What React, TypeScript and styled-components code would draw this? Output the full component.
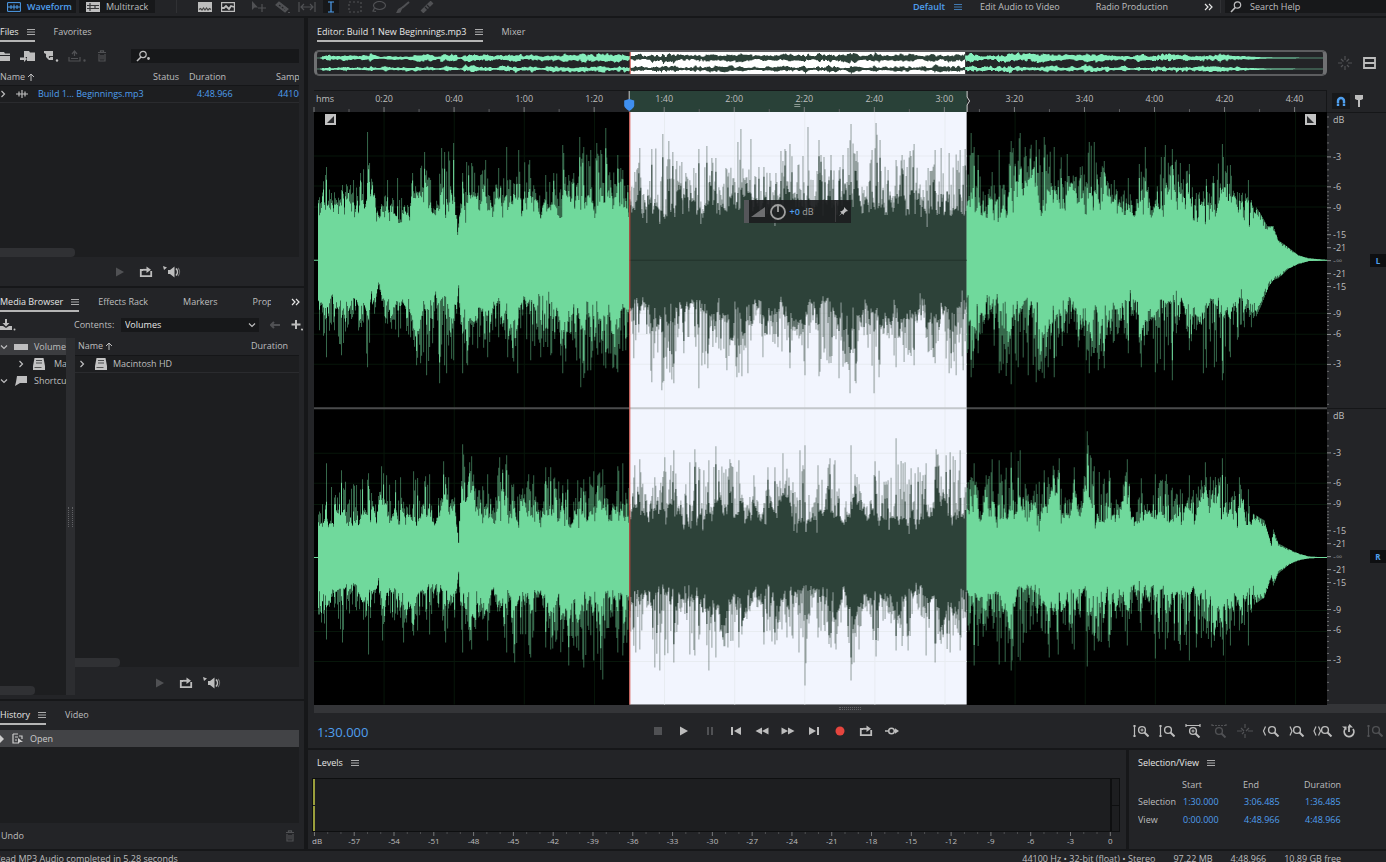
import React from 'react';
import styled, { createGlobalStyle } from 'styled-components';

const color = {
  gap: '#161719',
  panel: '#232427',
  well: '#1d1e20',
  dark: '#17181a',
  text: '#bebebf',
  bright: '#e6e6e6',
  dim: '#505154',
  blue: '#4f9fee',
  wave: '#70d99c',
  waveDark: '#2d4239',
  selection: '#f2f5fe',
};

const GlobalStyle = createGlobalStyle`
  * { box-sizing: border-box; }
  body { margin: 0; background: ${color.gap}; overflow: hidden; }
  body, button, input, select { font-family: 'Open Sans', 'Noto Sans', sans-serif; font-size: 9px; font-weight: 500; line-height: 12px; color: ${color.text}; }
  button { display: inline-flex; align-items: center; justify-content: center; padding: 0; border: 0; background: none; }
  svg { display: block; flex: none; }
  table { border-collapse: collapse; table-layout: fixed; width: 100%; }
  th { font-weight: 500; text-align: left; }
  th, td { padding: 0; white-space: nowrap; overflow: hidden; }
`;

/* ---------- frame ---------- */

const Shell = styled.div`
  display: flex;
  flex-direction: column;
  height: 100vh;
`;
const TopBar = styled.header`
  display: flex;
  align-items: flex-start;
  flex: none;
  height: 16px;
  background: ${color.panel};
`;
const Workspace = styled.main`
  display: grid;
  grid-template-columns: 304px minmax(0, 1fr);
  gap: 4px;
  flex: 1;
  min-height: 0;
  padding: 2px 0;
`;
const Column = styled.div`
  display: flex;
  flex-direction: column;
  gap: 2px;
  min-width: 0;
  min-height: 0;
`;
const Panel = styled.section<{ $height?: number }>`
  display: flex;
  flex-direction: column;
  flex: ${(p) => (p.$height ? `0 0 ${p.$height}px` : '1')};
  min-width: 0;
  min-height: 0;
  overflow: hidden;
  background: ${color.panel};
`;
const StatusBar = styled.footer`
  display: flex;
  flex: none;
  height: 11px;
  padding-right: 45px;
  overflow: hidden;
  background: ${color.panel};
  white-space: nowrap;
  line-height: 16px;
`;
const StatusMessage = styled.span`
  flex: 1;
  margin-left: -5px;
`;
const StatusItems = styled.div`
  display: flex;
  gap: 18px;
`;

/* ---------- shared parts ---------- */

const Tabs = styled.nav<{ $inset?: number; $spread?: boolean }>`
  display: flex;
  gap: 19px;
  flex: none;
  height: 24px;
  padding-left: ${(p) => p.$inset ?? 0}px;
  white-space: nowrap;
  overflow: hidden;
  ${(p) => (p.$spread ? 'button + button + button { margin-left: 16px; } button:last-child { margin-left: auto; margin-right: 4px; }' : '')}
`;
const Tab = styled.button<{ $active?: boolean; $clip?: number }>`
  gap: 8px;
  height: 24px;
  padding-top: 5px;
  border-bottom: 2px solid ${(p) => (p.$active ? '#b5b5b5' : 'transparent')};
  color: ${(p) => (p.$active ? color.bright : color.text)};
  ${(p) => (p.$clip ? `width: ${p.$clip}px; overflow: hidden; justify-content: flex-start;` : '')}
`;
const PanelTitle = styled.h2`
  display: flex;
  align-items: center;
  gap: 8px;
  flex: none;
  height: 26px;
  margin: 0;
  padding-left: 9px;
  font-size: 9px;
  font-weight: 500;
  color: ${color.bright};
`;
const IconButton = styled.button<{ $width?: number; $tone?: 'dim' | 'blue' | 'red' }>`
  flex: none;
  width: ${(p) => p.$width ?? 26}px;
  height: 16px;
  color: ${(p) => (p.$tone === 'dim' ? color.dim : p.$tone === 'blue' ? color.blue : p.$tone === 'red' ? '#e5453e' : '#bdbdbd')};
  background: ${(p) => (p.$tone === 'blue' ? color.dark : 'none')};
`;
const Divider = styled.span`
  width: 1px;
  height: 13px;
  background: #303134;
`;
const PreviewControls = styled.div<{ $start: number; $height: number }>`
  display: flex;
  align-items: center;
  flex: none;
  height: ${(p) => p.$height}px;
  padding-left: ${(p) => p.$start}px;
`;
const ScrollThumb = styled.div<{ $width: number }>`
  flex: none;
  width: ${(p) => p.$width}px;
  height: 9px;
  margin-top: auto;
  border-radius: 0 4px 4px 0;
  background: #303134;
`;

/* ---------- top bar ---------- */

const ModeButton = styled.button<{ $active?: boolean }>`
  gap: 6px;
  height: 13px;
  width: 76px;
  margin-right: 3px;
  padding: 0 0 0 7px;
  justify-content: flex-start;
  background: ${color.dark};
  color: ${(p) => (p.$active ? color.blue : color.text)};
  font-weight: ${(p) => (p.$active ? 600 : 500)};
`;
const Tools = styled.div<{ $gap: number; $start: number }>`
  display: flex;
  gap: ${(p) => p.$gap}px;
  margin-left: ${(p) => p.$start}px;
  button { height: 13px; }
`;
const Workspaces = styled.nav`
  display: flex;
  align-items: center;
  height: 13px;
  margin-left: auto;
`;
const WorkspaceButton = styled.button<{ $active?: boolean }>`
  gap: 9px;
  margin-right: ${(p) => (p.$active ? 18 : 36)}px;
  color: ${(p) => (p.$active ? color.blue : color.text)};
  font-weight: ${(p) => (p.$active ? 600 : 500)};
`;
const HelpSearch = styled.label`
  display: flex;
  align-items: center;
  gap: 8px;
  width: 161px;
  height: 13px;
  margin-left: 4px;
  padding-left: 5px;
  background: ${color.dark};
  input { width: 110px; height: 13px; padding: 0; border: 0; background: none; outline: 0; }
  input::placeholder { color: ${color.text}; opacity: 1; }
`;

/* ---------- files ---------- */

const FileTools = styled.div`
  display: flex;
  align-items: center;
  flex: none;
  height: 28px;
  padding-right: 5px;
`;
const FileSearch = styled.label`
  display: flex;
  align-items: center;
  flex: 1;
  height: 14px;
  margin-left: 22px;
  padding-left: 4px;
  background: ${color.dark};
  input { width: 100%; height: 12px; border: 0; background: none; outline: 0; }
`;
const Well = styled.div`
  display: flex;
  flex-direction: column;
  flex: 1;
  min-width: 0;
  min-height: 0;
  margin-right: 5px;
  background: ${color.well};
`;
const FilesTable = styled.table`
  th { height: 15px; background: ${color.panel}; }
  td { height: 17px; color: ${color.blue}; border-top: 1px solid #151618; border-bottom: 1px solid #2a2b2e; }
  th:first-child, td:first-child { width: 153px; }
  th:nth-child(2) { width: 36px; }
  th:nth-child(3) { width: 87px; }
  td:nth-child(3) { padding-left: 8px; }
  td:nth-child(4) { padding-left: 2px; }
`;
const CellRow = styled.span<{ $gap?: number; $indent?: number }>`
  display: flex;
  align-items: center;
  gap: ${(p) => p.$gap ?? 6}px;
  padding-left: ${(p) => p.$indent ?? 0}px;
`;

/* ---------- media browser ---------- */

const MediaTools = styled.div`
  display: flex;
  align-items: center;
  flex: none;
  height: 26px;
`;
const Contents = styled.label`
  display: flex;
  align-items: center;
  justify-content: space-between;
  width: 185px;
  margin-left: 58px;
`;
const SelectBox = styled.span`
  display: grid;
  align-items: center;
  width: 138px;
  background: ${color.dark};
  select, svg { grid-area: 1 / 1; }
  svg { justify-self: end; margin-right: 3px; }
  select { appearance: none; width: 138px; height: 14px; padding: 0 4px; border: 0; background: none; color: ${color.bright}; outline: 0; }
`;
const MediaBody = styled.div`
  display: grid;
  grid-template-columns: 66px 9px minmax(0, 1fr);
  flex: 1;
  min-height: 0;
  padding-right: 5px;
`;
const Tree = styled.ul`
  display: flex;
  flex-direction: column;
  margin: 0 0 4px;
  padding: 0;
  list-style: none;
  overflow: hidden;
  background: ${color.well};
`;
const TreeItem = styled.li<{ $depth?: number; $selected?: boolean }>`
  display: flex;
  align-items: center;
  gap: ${(p) => (p.$depth ? 9 : 6)}px;
  flex: none;
  height: 17px;
  padding-left: ${(p) => (p.$depth ? 18 : 0)}px;
  white-space: nowrap;
  background: ${(p) => (p.$selected ? '#3c3d40' : 'none')};
`;
const Splitter = styled.div`
  display: flex;
  align-items: center;
  justify-content: center;
  margin-bottom: 4px;
  background: #2c2d30;
  &::after { content: ''; width: 3px; height: 20px; border-left: 1px dotted #606164; border-right: 1px dotted #606164; }
`;
const MediaRight = styled.div`
  display: flex;
  flex-direction: column;
  min-width: 0;
`;
const MediaWell = styled.div`
  display: flex;
  flex-direction: column;
  flex: 1;
  min-height: 0;
  background: ${color.well};
`;
const MediaTable = styled.table`
  th { height: 17px; padding-left: 3px; background: ${color.panel}; }
  td { height: 17px; padding-left: 3px; border-top: 1px solid #151618; border-bottom: 1px solid #2a2b2e; }
  th:last-child { width: 48px; padding: 0; }
`;

/* ---------- history ---------- */

const HistoryList = styled.ol`
  flex: 1;
  margin: 5px 5px 0 0;
  padding: 0;
  list-style: none;
  background: ${color.well};
`;
const HistoryItem = styled.li`
  display: flex;
  align-items: center;
  gap: 7px;
  height: 17px;
  background: #424346;
  color: #cccccc;
`;
const HistoryFooter = styled.div`
  display: flex;
  align-items: center;
  justify-content: space-between;
  flex: none;
  height: 26px;
  padding: 0 8px 0 1px;
`;

/* ---------- editor ---------- */

const EditorRow = styled.div<{ $height?: number; $align?: string }>`
  display: grid;
  grid-template-columns: minmax(0, 1fr) 59px;
  align-items: ${(p) => p.$align ?? 'center'};
  flex: ${(p) => (p.$height ? `0 0 ${p.$height}px` : '1')};
  min-height: 0;
  padding-left: 6px;
`;
const OverviewFrame = styled.div`
  height: 26px;
  border: 2px solid #5c5d5f;
  border-left: 3px solid #6f7072;
  border-right: 4px solid #6f7072;
  border-radius: 5px;
  background: ${color.panel};
  svg { width: 100%; height: 22px; }
`;
const SideTools = styled.div`
  display: flex;
  align-items: center;
  height: 22px;
  padding-left: 5px;
`;
const RulerBox = styled.div`
  height: 22px;
  border-top: 1px solid #151618;
  border-right: 1px solid #151618;
  svg { width: 100%; height: 21px; overflow: visible; }
`;
const Canvas = styled.div`
  position: relative;
  height: 100%;
  background: #000;
  > svg { width: 100%; height: 100%; }
`;
const FadeHandle = styled.button<{ $side: 'left' | 'right' }>`
  position: absolute;
  top: 2px;
  ${(p) => p.$side}: 11px;
`;
const GainHud = styled.div`
  position: absolute;
  top: 88px;
  left: 42.4%;
  display: flex;
  align-items: center;
  gap: 4px;
  width: 107px;
  height: 23px;
  padding-left: 2px;
  border-left: 5px solid #55565a;
  background: rgba(28, 29, 31, 0.92);
  color: #a0a0a0;
  b { color: ${color.blue}; font-weight: 600; }
`;
const HudPin = styled.button`
  width: 16px;
  height: 21px;
  margin-left: auto;
  border-left: 1px solid #3a3a3c;
`;
const Scales = styled.div`
  display: flex;
  flex-direction: column;
  height: 100%;
`;
const ChannelScale = styled.div`
  display: flex;
  align-items: center;
  justify-content: space-between;
  flex: 1;
  min-height: 0;
  border-top: 1px solid #151618;
  svg { height: 100%; }
`;
const ChannelButton = styled.button`
  width: 16px;
  height: 13px;
  background: #0e0f11;
  color: ${color.blue};
  font-size: 8px;
  font-weight: 700;
`;
const HScroll = styled.div`
  flex: none;
  height: 9px;
  margin: 1px 0 0 6px;
  background: #343538;
  display: flex;
  align-items: center;
  justify-content: center;
`;
const Grip = styled.span`
  width: 22px;
  height: 3px;
  border-top: 1px dotted #606164;
  border-bottom: 1px dotted #606164;
`;
const Transport = styled.div`
  display: flex;
  align-items: center;
  flex: none;
  height: 35px;
  padding-left: 9px;
`;
const TimeDisplay = styled.output`
  flex: 0 0 328px;
  padding-top: 2px;
  font-size: 13px;
  line-height: 18px;
  color: ${color.blue};
`;
const ZoomTools = styled.div`
  display: flex;
  margin: 0 -2px 0 auto;
`;

/* ---------- bottom panels ---------- */

const BottomRow = styled.div`
  display: grid;
  grid-template-columns: minmax(0, 1fr) 257px;
  gap: 3px;
  flex: none;
  height: 99px;
`;
const Meter = styled.div`
  flex: none;
  height: 54px;
  margin: 2px 6px 0 4px;
  border: 1px solid #0e0f10;
  background: ${color.well};
  display: grid;
  grid-template-columns: 2px 1fr 9px;
`;
const MeterLevel = styled.span`
  display: grid;
  grid-template-rows: 1fr 1fr;
  gap: 1px;
  i { background: #9a9f3c; }
`;
const MeterClip = styled.div`
  grid-column: 3;
  border-left: 2px solid #0e0f10;
  background: linear-gradient(#0e0f10, #0e0f10) center / 100% 1px no-repeat;
`;
const MeterAxis = styled.svg`
  width: calc(100% - 10px);
  height: 16px;
  margin-left: 4px;
  overflow: visible;
`;
const RangeTable = styled.table`
  width: 240px;
  margin-left: 9px;
  th, td { height: 18px; }
  th:first-child { width: 44px; }
  td { color: ${color.blue}; padding-left: 1px; }
  thead th { height: 17px; }
  thead th:nth-child(2), thead th:nth-child(3) { width: 61px; }
`;

/* ---------- icons ---------- */

type IconProps = { w?: number; h?: number; children: React.ReactNode; fill?: boolean };
const Icon = ({ w = 14, h = 12, fill, children }: IconProps) => (
  <svg width={w} height={h} viewBox={`0 0 ${w} ${h}`} fill={fill ? 'currentColor' : 'none'} stroke={fill ? 'none' : 'currentColor'} strokeWidth="1.2" aria-hidden="true">
    {children}
  </svg>
);
const MenuIcon = () => (
  <Icon w={8} h={8}><path d="M0 1.500h8M0 4h8M0 6.500h8" strokeWidth="1" opacity=".7" /></Icon>
);
const LoopIcon = () => (
  <Icon w={14}><path d="M4 4H1.8v6.2h10.4V5" strokeWidth="1.8" /><path d="M4 3.8h4" strokeWidth="1.8" /><path d="M7.5.6 12 3.8 7.5 7z" fill="currentColor" stroke="none" /></Icon>
);
const SpeakerIcon = () => (
  <Icon w={18}><path d="M5 4h2l4.500-3.500v11L7 8H5z" fill="currentColor" stroke="none" /><path d="M13 2.500a5 5 0 0 1 0 7" strokeWidth="1.600" /><path d="M15 2a6 6 0 0 1 0 8" opacity=".5" /><path d="M0 0l4 1.500L1 4z" fill="currentColor" stroke="none" /></Icon>
);
const PlayIcon = () => <Icon w={10} h={10} fill><path d="M1 0.5 9 5 1 9.5z" /></Icon>;
const TrashIcon = () => (
  <Icon w={10}><path d="M1 2.5h8M3.5 2V.8h3V2M2 4v7h6V4M4 5v4.500M6 5v4.500" /></Icon>
);
const ChevronDown = () => <Icon w={8} h={8}><path d="M1 2.500 4 5.500 7 2.500" strokeWidth="1.200" /></Icon>;
const ChevronRight = () => <Icon w={6} h={8}><path d="M1.500 1 4.500 4 1.500 7" strokeWidth="1.200" /></Icon>;
const DriveIcon = () => (
  <Icon w={12} fill><path d="M1.500 0h9L12 8v4H0V8z" fill="#c4c4c4" /><path d="M3 2.500h6M3 5h6" stroke="#4b4c4e" strokeWidth="1" /><path d="M1.500 9.500h7" stroke="#555" strokeWidth="1" /></Icon>
);
const MagnifierIcon = () => (
  <Icon w={12}><circle cx="7.500" cy="4" r="3.200" /><path d="M5.200 6.500 1 11" strokeWidth="1.600" /></Icon>
);
const RightLens = ({ x = 0 }: { x?: number }) => (
  <g transform={`translate(${x} 0)`}><circle cx="4" cy="5" r="3.400" strokeWidth="1.400" /><path d="M6.500 7.500 10.500 11.500" strokeWidth="2" /></g>
);

/* ---------- waveform data ---------- */

const WIDTH = 1012;
const SEL_START = 315;
const SEL_END = 652;
const TOTAL_SECONDS = 288.966;

const leftUp = '4:60 12:93 17:67 28:75 39:80 46:87 53:128 55:97 61:62 64:45 73:80 78:62 83:82 93:55 98:87 106:92 110:108 116:80 121:50 127:112 130:108 139:117 143:28 148:87 152:98 157:97 166:85 171:100 176:60 184:92 192:113 196:80 204:110 215:100 223:60 231:85 239:87 248:115 254:85 259:87 265:123 269:113 276:110 282:117 286:110 291:132 296:80 303:105 308:90 313:75 325:112 330:60 337:111 348:126 354:119 358:108 367:98 371:87 379:92 384:111 392:114 397:102 401:102 406:65 411:92 423:118 426:131 430:80 436:121 444:93 449:93 461:87 466:109 470:111 475:116 483:95 493:133 498:80 504:120 509:103 516:105 528:105 536:136 542:109 549:70 557:110 561:137 565:120 573:90 576:60 581:100 587:105 595:109 599:116 608:70 613:92 620:110 626:112 634:107 645:110 650:111 656:127 663:105 670:65 677:88 684:110 690:70 696:119 705:127 710:113 721:120 729:123 739:113 752:106 760:83 765:93 774:118 779:118 789:99 799:80 813:82 819:45 824:96 830:113 837:50 846:103 850:115 857:111 865:97 874:96 881:67 891:81 898:84 907:116 915:95 924:67 933:80 936:60 946:45 952:34 958:34 963:20 974:12 983:5 993:2 1012:0';
const leftDown = '5:70 12:97 20:70 27:95 38:57 53:107 61:47 64:25 71:63 84:77 96:77 102:105 112:115 118:83 125:123 132:113 139:100 144:28 148:113 153:105 163:88 173:97 178:70 193:97 203:113 216:100 226:97 236:95 248:113 258:80 266:127 276:110 291:108 303:112 311:90 319:98 329:50 337:122 347:130 359:123 369:93 384:128 393:108 406:90 412:110 422:117 427:116 433:113 442:50 448:97 463:87 475:108 482:75 490:115 498:60 504:116 514:103 524:118 535:133 541:123 549:75 559:133 564:117 572:75 581:107 599:105 606:60 613:92 620:103 634:113 641:115 648:110 656:117 663:93 673:60 684:113 696:124 703:107 713:115 721:122 729:118 739:117 752:73 763:87 774:113 783:110 789:108 803:73 813:93 819:50 826:107 836:60 840:112 849:110 857:120 864:60 874:90 881:70 888:113 899:107 907:120 915:97 929:67 936:67 946:45 953:27 958:20 963:18 974:8 983:4 993:1 1012:0';
const rightUp = '4:43 12:94 20:60 27:87 39:73 48:78 54:84 61:53 67:91 72:82 86:80 93:50 99:86 111:81 115:83 120:33 129:96 134:80 140:60 144:15 148:113 157:101 164:67 173:83 178:47 185:100 192:102 199:73 214:83 219:82 226:47 231:90 236:90 248:72 253:78 263:77 269:78 279:86 288:88 296:43 303:91 308:94 320:92 325:98 331:63 340:80 350:100 359:107 366:57 375:95 380:108 384:90 394:97 401:111 411:88 415:98 424:97 431:50 439:82 446:40 453:90 460:90 468:104 478:75 485:107 490:112 497:50 503:92 515:99 520:97 530:50 536:112 544:73 551:50 560:96 573:77 581:119 590:95 603:90 611:94 616:50 621:108 631:102 635:105 645:107 650:70 659:94 663:67 677:98 684:97 696:105 705:107 713:63 721:73 729:87 744:99 750:60 759:90 765:50 772:126 779:91 794:87 804:50 812:98 819:35 826:79 835:45 840:83 851:83 865:68 874:82 890:95 898:77 907:99 916:60 924:80 933:68 939:43 949:37 956:13 958:28 963:14 974:8 983:4 993:1 1012:0';
const rightDown = '4:57 12:82 20:50 28:85 38:47 54:97 64:23 68:83 78:60 89:85 99:78 115:77 120:33 131:85 140:60 144:16 148:95 157:92 164:60 173:83 178:33 192:95 200:105 216:100 224:40 231:90 236:92 254:108 269:110 279:103 288:122 296:60 303:95 308:98 321:95 325:92 332:50 340:110 345:113 359:105 367:50 375:97 380:98 394:113 401:100 413:90 424:90 440:40 449:87 460:87 472:80 484:95 490:128 497:50 503:80 516:90 521:92 530:50 536:123 544:92 550:50 561:99 573:55 581:93 593:93 604:50 611:98 620:105 635:95 645:93 650:60 659:108 671:73 684:107 696:113 705:103 718:67 734:100 743:97 759:92 765:60 772:109 779:93 794:90 804:50 812:88 819:35 826:73 834:45 840:101 850:92 865:93 874:103 881:90 896:90 908:98 915:88 924:73 933:88 939:47 949:40 956:20 958:28 963:16 974:7 983:3 993:1 1012:0';

type Side = { peak: number[]; body: number[] };

function seeded(seed: number) {
  let s = seed;
  return () => {
    s = (s * 1664525 + 1013904223) % 4294967296;
    return s / 4294967296;
  };
}

/* Slowly moving noise in 0..1 with a new target every `step` columns. */
function drift(step: number, random: () => number) {
  const knots = Array.from({ length: Math.ceil(WIDTH / step) + 2 }, random);
  return (x: number) => {
    const k = Math.floor(x / step);
    const t = x / step - k;
    return knots[k] * (1 - t) + knots[k + 1] * t;
  };
}

/* Expands sparse "x:height" peaks into one column per pixel. */
function expand(source: string, floor: number, seed: number): Side {
  const random = seeded(seed);
  const slow = drift(11, random);
  const quick = drift(2, random);
  const points = source.split(' ').map((p) => p.split(':').map(Number));
  const peak: number[] = [];
  const body: number[] = [];
  let i = 0;
  for (let x = 0; x <= WIDTH; x++) {
    if (x < 4) {
      peak.push(0);
      body.push(0);
      continue;
    }
    while (i < points.length - 2 && points[i + 1][0] <= x) i++;
    const [x0, h0] = points[i];
    const [x1, h1] = points[i + 1];
    const env = h0 + ((h1 - h0) * (x - x0)) / (x1 - x0);
    if (x > 940) {
      peak.push(env);
      body.push(env * (0.82 + 0.18 * random()));
      continue;
    }
    const dip = random() < 0.05 ? 0.72 : 1;
    const base = Math.min(floor * (0.8 + 0.35 * quick(x)) * dip, env * 0.85);
    const room = env - base;
    const swell = base + room * 0.75 * slow(x) * (0.2 + 0.8 * quick(x));
    const tall = random();
    const top = x === x0 ? env : tall < 0.35 ? swell : swell + (env - swell) * (0.1 + 0.85 * random());
    const solid = tall > 0.82 ? swell + (top - swell) * 0.6 : swell * (0.9 + 0.1 * random());
    peak.push(Math.max(top, swell));
    body.push(x === x0 ? Math.max(swell, base + room * (h0 % 3 ? 0.3 : 0.75)) : solid);
  }
  return { peak, body };
}

const channels = [
  { center: 148, up: expand(leftUp, 50, 7), down: expand(leftDown, 44, 21) },
  { center: 445, up: expand(rightUp, 38, 43), down: expand(rightDown, 34, 91) },
];

/* Stepped columns, so that single peaks stay crisp. */
function columns(center: number, up: number[], down: number[], from: number, to: number) {
  let d = `M${from} ${center}`;
  for (let x = from; x < to; x++) d += `V${(center - up[x]).toFixed(1)}H${x + 1}`;
  for (let x = to - 1; x >= from; x--) d += `V${(center + down[x]).toFixed(1)}H${x}`;
  return d + 'Z';
}

const segments = [
  { from: 0, to: SEL_START, fill: color.wave },
  { from: SEL_START, to: SEL_END, fill: color.waveDark },
  { from: SEL_END, to: WIDTH, fill: color.wave },
];

const gridX = Array.from({ length: 14 }, (_, i) => ((i + 1) * 20 * WIDTH) / TOTAL_SECONDS);
const gridY = channels.flatMap((c) => [-104, -74, -53, 53, 74, 104].map((o) => c.center + o));

const Waveform = () => (
  <svg viewBox="0 0 1012 592" preserveAspectRatio="none" role="img" aria-label="Stereo waveform">
    <path d={gridX.map((x) => `M${x.toFixed(1)} 0V592`).join('') + gridY.map((y) => `M0 ${y}H1012`).join('')} stroke="#07160a" strokeWidth="1" />
    <rect x={SEL_START} width={SEL_END - SEL_START} height="592" fill={color.selection} />
    <path d={gridX.filter((x) => x > SEL_START && x < SEL_END).map((x) => `M${x.toFixed(1)} 0V592`).join('') + gridY.map((y) => `M${SEL_START} ${y}H${SEL_END}`).join('')} stroke="#e8ecf1" strokeWidth="1" />
    {channels.map((c) =>
      segments.map((s) => (
        <g key={`${c.center}-${s.from}`} fill={s.fill}>
          <path d={columns(c.center, c.up.peak, c.down.peak, s.from, s.to)} opacity=".48" />
          <path d={columns(c.center, c.up.body, c.down.body, s.from, s.to)} />
        </g>
      )),
    )}
    <path d="M0 148H4M0 445H4M990 148H1012M990 445H1012" stroke={color.wave} strokeWidth="1" />
    <path d={`M${SEL_START} 148H${SEL_END}`} stroke="#22332b" strokeWidth="1" />
    <path d={`M0 296H${SEL_START}M${SEL_END} 296H1012`} stroke="#4a4b4c" strokeWidth="2" />
    <path d={`M${SEL_START} 296H${SEL_END}`} stroke="#c3c7cb" strokeWidth="2" />
    <path d={`M${SEL_START}.5 0V592`} stroke="#d2463c" strokeWidth="1" />
  </svg>
);

/* Quiet parts stay a thin line in the overview, loud clusters swell. */
const overviewHeight = (side: Side) =>
  side.peak.map((_, i) => {
    const h = ((side.peak[i - 1] ?? 0) + side.peak[i] + (side.body[i + 1] ?? 0)) / 3;
    return 0.3 + h * 0.014 + Math.max(0, h - 45) * 0.055;
  });
const overview = channels.map((c, i) => ({ center: i ? 17 : 6, up: overviewHeight(c.up), down: overviewHeight(c.down) }));

const Overview = () => (
  <svg viewBox="0 0 1012 22" preserveAspectRatio="none" role="img" aria-label="Overview">
    <rect x={SEL_START} width={SEL_END - SEL_START} height="22" fill="#fff" />
    {overview.map((c) =>
      segments.map((s) => (
        <path key={`${c.center}-${s.from}`} d={columns(c.center, c.up, c.down, s.from, s.to)} fill={s.fill === color.wave ? '#86efbd' : s.fill} />
      )),
    )}
    <path d={`M${SEL_START} 0V22`} stroke="#d2463c" strokeWidth="1" />
  </svg>
);

const at = (seconds: number) => `${((seconds / TOTAL_SECONDS) * 100).toFixed(3)}%`;

const Ruler = () => (
  <svg role="img" aria-label="Time ruler">
    <rect x={at(90)} width={at(96.485)} height="21" fill="#294138" />
    {Array.from({ length: 29 }, (_, i) => (
      <line key={i} x1={at(i * 10)} x2={at(i * 10)} y1={i % 2 ? 18 : 16} y2="21" stroke={i % 2 ? '#5d5e60' : '#7d7e80'} />
    ))}
    <text x="2" y="11" fill={color.text}>hms</text>
    {Array.from({ length: 14 }, (_, i) => {
      const s = (i + 1) * 20;
      return (
        <text key={s} x={at(s)} y="11" fill={color.text} textAnchor="middle">
          {`${Math.floor(s / 60)}:${String(s % 60).padStart(2, '0')}`}
        </text>
      );
    })}
    <svg x={at(90)} overflow="visible">
      <path d="M0 0V10" stroke="#c8c8c8" />
      <path d="M-5 9.500 0 8l5 1.500v5C5 17 0 20 0 20s-5-3-5-5.500z" fill="#3f8ff0" />
    </svg>
    <svg x={at(186.485)} overflow="visible">
      <path d="M0 0V6L2.500 10 0 14V21" stroke="#d0d0d0" fill="none" />
    </svg>
    <svg x={at(138)} overflow="visible">
      <path d="M-3 13.500h6M-3 15.500h6" stroke="#8b9a93" />
    </svg>
  </svg>
);

const dbMarks = [
  { label: '-3', offset: 104 },
  { label: '-6', offset: 74 },
  { label: '-9', offset: 53 },
  { label: '-15', offset: 26 },
  { label: '-21', offset: 13 },
];
const minorDb = [144, 134, 126, 118, 111, 97, 91, 85, 80, 69, 65, 61, 57, 49, 45, 42, 39, 36, 33, 30, 22, 18];
const pct = (offset: number) => `${(50 + (offset / 296) * 100).toFixed(2)}%`;

const DbScale = () => (
  <svg width="36" role="img" aria-label="Decibel scale">
    {minorDb.flatMap((o) => [o, -o]).map((o) => (
      <line key={o} x1="0" x2="2" y1={pct(o)} y2={pct(o)} stroke="#6b6c6e" />
    ))}
    <text x="6" y={pct(-138)} fill={color.text}>dB</text>
    {dbMarks.flatMap((m) => [m.offset, -m.offset].map((o) => (
      <g key={o}>
        <line x1="0" x2="4" y1={pct(o)} y2={pct(o)} stroke="#8b8c8e" />
        <text x="6" y={pct(o + 3)} fill={color.text}>{m.label}</text>
      </g>
    )))}
    <line x1="0" x2="4" y1="50%" y2="50%" stroke="#8b8c8e" />
    <text x="6" y={pct(3)} fill="#77787a">-∞</text>
  </svg>
);

const LevelAxis = () => (
  <MeterAxis role="img" aria-label="Level scale">
    {Array.from({ length: 61 }, (_, i) => {
      const x = `${(98.800 - (i * 98.500) / 60).toFixed(3)}%`;
      return (
        <g key={i}>
          <line x1={x} x2={x} y1="0" y2={i % 3 ? 2 : 4} stroke={i % 3 ? '#4d4e50' : '#77787a'} />
          {i % 3 === 0 && i < 60 && (
            <text x={x} y="12" fontSize="8" fill={color.text} textAnchor="middle">{i ? `-${i}` : '0'}</text>
          )}
        </g>
      );
    })}
    <text x="0" y="12" fontSize="8" fill={color.text}>dB</text>
  </MeterAxis>
);

/* ---------- toolbars ---------- */

type ToolSpec = { label: string; tone?: 'dim' | 'blue' | 'red'; icon: React.ReactNode };

const viewTools: ToolSpec[] = [
  { label: 'Spectral frequency display', icon: <Icon w={14} h={10} fill><path d="M0 0h14v10H0z" /><path d="M1 7.500l1.500-1L4 8l1.500-2L7 8l1.500-2L10 8l1.500-1.500L13 7.500" stroke="#444" fill="none" /></Icon> },
  { label: 'Spectral pitch display', icon: <Icon w={14} h={10}><path d="M.6.6h12.800v8.800H.6z" /><path d="M1 6h2l2-2 3 3 2-3 3 1" strokeWidth="1.800" /></Icon> },
];
const editTools: ToolSpec[] = [
  { label: 'Move', tone: 'dim', icon: <Icon w={16}><path d="M1 0v9l2.500-2.500H7z" fill="currentColor" stroke="none" /><path d="M11 3v8M7 7h8" /></Icon> },
  { label: 'Razor', tone: 'dim', icon: <Icon w={16}><path d="M1 4 4 1l9 7-3 3z" fill="currentColor" /><path d="M4 4l6 4.500" stroke={color.panel} strokeDasharray="2 1.500" /><path d="M13 11.500h2" /></Icon> },
  { label: 'Slip', tone: 'dim', icon: <Icon w={18}><path d="M1 1v10M17 1v10M3 6h12M6 3 3 6l3 3M12 3l3 3-3 3" /></Icon> },
  { label: 'Time selection', tone: 'blue', icon: <Icon w={10}><path d="M2 1h2.500l.5.500.5-.5H8M2 11h2.500l.5-.5.5.5H8M5 1v10" /></Icon> },
  { label: 'Marquee selection', tone: 'dim', icon: <Icon w={14}><path d="M1 1h12v10H1z" strokeDasharray="2 2" /></Icon> },
  { label: 'Lasso selection', tone: 'dim', icon: <Icon w={16}><ellipse cx="8.500" cy="4.500" rx="6" ry="4" /><path d="M3.500 7 2 10l3 .5" /></Icon> },
  { label: 'Paintbrush', tone: 'dim', icon: <Icon w={14}><path d="M13 1 6 7" strokeWidth="2" /><path d="M6 6.500 4 11l-3 .5 1.500-3z" fill="currentColor" /></Icon> },
  { label: 'Spot healing', tone: 'dim', icon: <Icon w={14}><path d="M12 1 2 11" strokeWidth="4" /><path d="M5 6l3 3M7 4l3 3" stroke={color.panel} /></Icon> },
];
const transportTools: ToolSpec[] = [
  { label: 'Stop', tone: 'dim', icon: <Icon w={8} h={8} fill><path d="M0 0h8v8H0z" /></Icon> },
  { label: 'Play', icon: <PlayIcon /> },
  { label: 'Pause', tone: 'dim', icon: <Icon w={8} h={8} fill><path d="M1 0h2v8H1zM5 0h2v8H5z" /></Icon> },
  { label: 'Go to previous', icon: <Icon w={12} h={8} fill><path d="M1 0h2v8H1zM11 0v8L4 4z" /></Icon> },
  { label: 'Rewind', icon: <Icon w={14} h={8} fill><path d="M7 .5v7L.5 4zM13.500.5v7L7 4z" /></Icon> },
  { label: 'Fast forward', icon: <Icon w={14} h={8} fill><path d="M.5.5v7L7 4zM7 .5v7L13.500 4z" /></Icon> },
  { label: 'Go to next', icon: <Icon w={12} h={8} fill><path d="M9 0h2v8H9zM1 0v8l7-4z" /></Icon> },
  { label: 'Record', tone: 'red', icon: <Icon w={10} h={10} fill><circle cx="5" cy="5" r="4.500" /></Icon> },
  { label: 'Loop playback', icon: <LoopIcon /> },
  { label: 'Skip selection', icon: <Icon w={14} h={10}><circle cx="6.500" cy="5" r="2.800" strokeWidth="1.500" /><path d="M0 5h3M9 5h2" strokeWidth="1.500" /><path d="M10 2.300 14 5l-4 2.700z" fill="currentColor" stroke="none" /></Icon> },
];
const zoomTools: ToolSpec[] = [
  { label: 'Zoom in amplitude', icon: <Icon w={16}><path d="M1.500 0v12M0 1h3M0 11h3" /><RightLens x={5} /><path d="M7.500 5h3M9 3.500v3" strokeWidth="1" /></Icon> },
  { label: 'Zoom out amplitude', icon: <Icon w={16}><path d="M1.500 0v12M0 1h3M0 11h3" /><RightLens x={5} /></Icon> },
  { label: 'Zoom in time', icon: <Icon w={16} h={14}><path d="M1 1.500h14M1 0v3M15 0v3" /><g transform="translate(4 2)"><RightLens /><path d="M2.500 5h3M4 3.500v3" strokeWidth="1" /></g></Icon> },
  { label: 'Zoom out time', tone: 'dim', icon: <Icon w={16} h={14}><path d="M1 1.500h14M1 0v3M15 0v3" strokeDasharray="2 1" /><g transform="translate(4 2)"><RightLens /></g></Icon> },
  { label: 'Zoom out full', tone: 'dim', icon: <Icon w={16} h={14}><path d="M8 0v4M8 10v4M0 7h5M11 7h5M4 4l3 3M12 4 9 7M5 10l2-2" /></Icon> },
  { label: 'Zoom in at in point', icon: <Icon w={18}><path d="M3.500 1.500 1.500 6l2 4.500" /><RightLens x={6} /></Icon> },
  { label: 'Zoom in at out point', icon: <Icon w={16}><path d="M1 1.500 3 6l-2 4.500" /><RightLens x={4} /></Icon> },
  { label: 'Zoom to selection', icon: <Icon w={20}><path d="M3 1.500 1 6l2 4.500M5.500 1.500l2 4.500-2 4.500" /><RightLens x={8} /></Icon> },
  { label: 'Zoom to time', icon: <Icon w={14} h={14}><path d="M3.500 4.500a4.800 4.800 0 1 0 7.500.5M7 8V3" strokeWidth="1.800" /><path d="M7.500 0l3.500 3.500H5.500zM0 2.500h4.500v3.500z" fill="currentColor" stroke="none" /></Icon> },
  { label: 'Zoom reset', tone: 'dim', icon: <Icon w={16}><path d="M1.500 0v12M0 1h3M0 11h3" /><RightLens x={5} /></Icon> },
];

const ToolButtons = ({ tools, width }: { tools: ToolSpec[]; width?: number }) => (
  <>
    {tools.map((t) => (
      <IconButton key={t.label} aria-label={t.label} $tone={t.tone} $width={width}>{t.icon}</IconButton>
    ))}
  </>
);

const Preview = ({ start, height }: { start: number; height: number }) => (
  <PreviewControls $start={start} $height={height}>
    <IconButton aria-label="Play preview" $tone="dim"><PlayIcon /></IconButton>
    <IconButton aria-label="Loop preview"><LoopIcon /></IconButton>
    <IconButton aria-label="Auto-play"><SpeakerIcon /></IconButton>
  </PreviewControls>
);

const SortArrow = () => <Icon w={8} h={8}><path d="M4 8V1M1 4l3-3 3 3" strokeWidth="1" /></Icon>;
const MoreIcon = () => <Icon w={9} h={8}><path d="M1 1l3 3-3 3M5 1l3 3-3 3" stroke={color.bright} /></Icon>;

/* ---------- panels ---------- */

const FilesPanel = () => (
  <Panel $height={268}>
    <Tabs>
      <Tab $active>Files<MenuIcon /></Tab>
      <Tab>Favorites</Tab>
    </Tabs>
    <FileTools>
      <IconButton aria-label="Open file" $width={12}><Icon w={12} fill><path d="M0 2h4l1 1.500h5V5H0zM0 6h10v5H0z" /></Icon></IconButton>
      <IconButton aria-label="Import file" $width={30}><Icon w={15} fill><path d="M4 1h5l1 1.500h5V11H7V7H4zM0 7.500h4V5.500L7 9l-3 3v-2H0z" /></Icon></IconButton>
      <IconButton aria-label="New content" $width={18}><Icon w={15} fill><path d="M0 1h9v9H5L2 7V4L0 3z" /><path d="M5.500 8V6.500H9" stroke="#333" fill="none" /><circle cx="13" cy="10.500" r="1.200" /></Icon></IconButton>
      <IconButton aria-label="Insert into multitrack" $width={34} $tone="dim"><Icon w={18}><path d="M1 7v4h11V7M3 8.500h7M6.500 6V1M4 4l2.500-3L9 4" /><circle cx="16.500" cy="10.500" r=".6" /></Icon></IconButton>
      <IconButton aria-label="Delete file" $width={15} $tone="dim"><TrashIcon /></IconButton>
      <FileSearch>
        <Icon w={16}><circle cx="8" cy="4.500" r="3.200" /><path d="M6 7 2 11" strokeWidth="1.600" /><circle cx="13.500" cy="8.500" r=".8" fill="currentColor" /></Icon>
        <input aria-label="Search files" />
      </FileSearch>
    </FileTools>
    <Well>
      <FilesTable>
        <thead>
          <tr>
            <th><CellRow $gap={2}>Name<SortArrow /></CellRow></th>
            <th>Status</th>
            <th>Duration</th>
            <th>Sample</th>
          </tr>
        </thead>
        <tbody>
          <tr>
            <td>
              <CellRow $gap={6}>
                <IconButton aria-label="Expand file" $width={6}><ChevronRight /></IconButton>
                <IconButton aria-label="Audio file" $width={20}><Icon w={12} h={8}><path d="M0 4h12M3 1.500v5M6 0v8M9 1.500v5" /></Icon></IconButton>
                Build 1... Beginnings.mp3
              </CellRow>
            </td>
            <td />
            <td>4:48.966</td>
            <td>44100</td>
          </tr>
        </tbody>
      </FilesTable>
      <ScrollThumb $width={75} />
    </Well>
    <Preview start={107} height={29} />
  </Panel>
);

const MediaPanel = () => (
  <Panel>
    <Tabs $spread>
      <Tab $active>Media Browser<MenuIcon /></Tab>
      <Tab>Effects Rack</Tab>
      <Tab>Markers</Tab>
      <Tab $clip={18}>Properties</Tab>
      <Tab aria-label="More panels"><MoreIcon /></Tab>
    </Tabs>
    <MediaTools>
      <IconButton aria-label="Import media" $width={16}><Icon w={16} fill><path d="M0 7h3l3 2 3-2h3v4H0zM5 0h2v4h2.500L6 7.500 2.500 4H5z" /><circle cx="14.500" cy="10.500" r="1" /></Icon></IconButton>
      <Contents>
        Contents:
        <SelectBox>
          <select defaultValue="Volumes"><option>Volumes</option></select>
          <ChevronDown />
        </SelectBox>
      </Contents>
      <IconButton aria-label="Back" $tone="dim" $width={32}><Icon w={10} h={8}><path d="M1 4h9M4 1 1 4l3 3" strokeWidth="2" /></Icon></IconButton>
      <IconButton aria-label="Add shortcut" $width={12}><Icon w={12}><path d="M5 1v9M.5 5.500h9" strokeWidth="2" /><circle cx="11" cy="10.500" r=".5" /></Icon></IconButton>
    </MediaTools>
    <MediaBody>
      <Tree>
        <TreeItem $selected><ChevronDown /><Icon w={14} h={6} fill><path d="M0 0h14v6H0z" /></Icon>Volumes</TreeItem>
        <TreeItem $depth={1}><ChevronRight /><DriveIcon />Macintosh HD</TreeItem>
        <TreeItem><ChevronDown /><Icon w={14} h={10} fill><path d="M3 0h10v7H6L1 10l1-4z" /></Icon>Shortcuts</TreeItem>
        <ScrollThumb $width={35} />
      </Tree>
      <Splitter />
      <MediaRight>
        <MediaWell>
          <MediaTable>
            <thead>
              <tr>
                <th><CellRow $gap={2}>Name<SortArrow /></CellRow></th>
                <th>Duration</th>
              </tr>
            </thead>
            <tbody>
              <tr>
                <td><CellRow $indent={1}><ChevronRight /><CellRow $indent={4}><DriveIcon />Macintosh HD</CellRow></CellRow></td>
                <td />
              </tr>
            </tbody>
          </MediaTable>
          <ScrollThumb $width={45} />
        </MediaWell>
        <Preview start={72} height={32} />
      </MediaRight>
    </MediaBody>
  </Panel>
);

const HistoryPanel = () => (
  <Panel $height={148}>
    <Tabs>
      <Tab $active>History<MenuIcon /></Tab>
      <Tab>Video</Tab>
    </Tabs>
    <HistoryList>
      <HistoryItem>
        <Icon w={5} h={8} fill><path d="M0 0l4 4-4 4z" /></Icon>
        <Icon w={11}><path d="M1 1h5M1 1v9h5M3 4h3M3 7h2M7 3h3v3" /><path d="M6 5v6l2-2h3z" fill="currentColor" stroke="none" /></Icon>
        Open
      </HistoryItem>
    </HistoryList>
    <HistoryFooter>
      Undo
      <IconButton aria-label="Delete history" $tone="dim" $width={12}><TrashIcon /></IconButton>
    </HistoryFooter>
  </Panel>
);

const FadeIcon = ({ flip }: { flip?: boolean }) => (
  <Icon w={11} h={11} fill>
    <path d="M0 0h11v11H0z" fill="#c2c2c2" />
    <path d={flip ? 'M2 2v7h7z' : 'M9 2v7H2z'} fill="#2a2b2d" />
  </Icon>
);

const EditorPanel = () => (
  <Panel>
    <Tabs $inset={9}>
      <Tab $active>Editor: Build 1 New Beginnings.mp3<MenuIcon /></Tab>
      <Tab>Mixer</Tab>
    </Tabs>
    <EditorRow $height={42}>
      <OverviewFrame><Overview /></OverviewFrame>
      <SideTools>
        <IconButton aria-label="Zoom out overview" $tone="dim"><Icon w={14} h={14}><path d="M7 0v4M7 10v4M0 7h4M10 7h4M3 3l2.500 2.500M11 3 8.500 5.500M3 11l2-2M11 11 9 9" /></Icon></IconButton>
        <IconButton aria-label="Toggle display" $width={22}><Icon w={13}><path d="M1 1h11v10H1zM1 6h11" strokeWidth="1.800" /></Icon></IconButton>
      </SideTools>
    </EditorRow>
    <EditorRow $height={28} $align="end">
      <RulerBox><Ruler /></RulerBox>
      <SideTools>
        <IconButton aria-label="Snapping" $tone="blue" $width={18}><Icon w={12}><path d="M3 11V9M9 11V9M3 8.500V6a3 3 0 0 1 6 0v2.500" strokeWidth="2.400" /></Icon></IconButton>
        <IconButton aria-label="Add marker" $width={18}><Icon w={8} fill><path d="M0 0h8v4L6 5H5v7H3V5H2L0 4z" /></Icon></IconButton>
      </SideTools>
    </EditorRow>
    <EditorRow $align="stretch">
      <Canvas>
        <Waveform />
        <FadeHandle $side="left" aria-label="Fade in"><FadeIcon /></FadeHandle>
        <FadeHandle $side="right" aria-label="Fade out"><FadeIcon flip /></FadeHandle>
        <GainHud>
          <Icon w={15} fill><path d="M0 11 14 1v10z" fill="#6d6e70" /></Icon>
          <Icon w={16} h={16}><circle cx="8" cy="8" r="7" strokeWidth="1.800" /><path d="M8 2v6" strokeWidth="1.800" /></Icon>
          <span><b>+0</b> dB</span>
          <HudPin aria-label="Pin"><Icon w={9} h={9} fill><path d="M5 0l4 4-2 .5-2 2L4.500 8 3 6.500 0 9l2.500-3L1 4.500 3 4l2-2z" /></Icon></HudPin>
        </GainHud>
      </Canvas>
      <Scales>
        <ChannelScale><DbScale /><ChannelButton>L</ChannelButton></ChannelScale>
        <ChannelScale><DbScale /><ChannelButton>R</ChannelButton></ChannelScale>
      </Scales>
    </EditorRow>
    <HScroll><Grip /></HScroll>
    <Transport>
      <TimeDisplay>1:30.000</TimeDisplay>
      <ToolButtons tools={transportTools} />
      <ZoomTools><ToolButtons tools={zoomTools} /></ZoomTools>
    </Transport>
  </Panel>
);

const App = () => (
  <Shell>
    <GlobalStyle />
    <TopBar>
      <ModeButton $active><Icon w={14} h={10}><path d="M.6.6h12.800v8.800H.6zM1 5h12M4 3v4M7 2.500v5M10 3v4" strokeWidth="1" /></Icon>Waveform</ModeButton>
      <ModeButton><Icon w={14} h={10} fill><path d="M0 0h14v10H0z" /><path d="M1 3.500h12M1 6.500h12M4 1v8M9 4v2" stroke="#38393b" /></Icon>Multitrack</ModeButton>
      <Tools $gap={0} $start={18}><Divider /></Tools>
      <Tools $gap={7} $start={20}><ToolButtons tools={viewTools} width={16} /></Tools>
      <Tools $gap={8} $start={15}><ToolButtons tools={editTools} width={16} /></Tools>
      <Workspaces>
        <WorkspaceButton $active>Default<MenuIcon /></WorkspaceButton>
        <WorkspaceButton>Edit Audio to Video</WorkspaceButton>
        <WorkspaceButton>Radio Production</WorkspaceButton>
        <IconButton aria-label="More workspaces" $width={8}><MoreIcon /></IconButton>
      </Workspaces>
      <Tools $gap={0} $start={8}><Divider /></Tools>
      <HelpSearch>
        <MagnifierIcon />
        <input aria-label="Search Help" placeholder="Search Help" />
      </HelpSearch>
    </TopBar>
    <Workspace>
      <Column>
        <FilesPanel />
        <MediaPanel />
        <HistoryPanel />
      </Column>
      <Column>
        <EditorPanel />
        <BottomRow>
          <Panel>
            <PanelTitle>Levels<MenuIcon /></PanelTitle>
            <Meter><MeterLevel><i /><i /></MeterLevel><MeterClip /></Meter>
            <LevelAxis />
          </Panel>
          <Panel>
            <PanelTitle>Selection/View<MenuIcon /></PanelTitle>
            <RangeTable>
              <thead>
                <tr><th aria-label="Range" /><th>Start</th><th>End</th><th>Duration</th></tr>
              </thead>
              <tbody>
                <tr><th>Selection</th><td>1:30.000</td><td>3:06.485</td><td>1:36.485</td></tr>
                <tr><th>View</th><td>0:00.000</td><td>4:48.966</td><td>4:48.966</td></tr>
              </tbody>
            </RangeTable>
          </Panel>
        </BottomRow>
      </Column>
    </Workspace>
    <StatusBar>
      <StatusMessage>Read MP3 Audio completed in 5.28 seconds</StatusMessage>
      <StatusItems>
        <span>44100 Hz • 32-bit (float) • Stereo</span>
        <span>97.22 MB</span>
        <span>4:48.966</span>
        <span>10.89 GB free</span>
      </StatusItems>
    </StatusBar>
  </Shell>
);

export default App;
